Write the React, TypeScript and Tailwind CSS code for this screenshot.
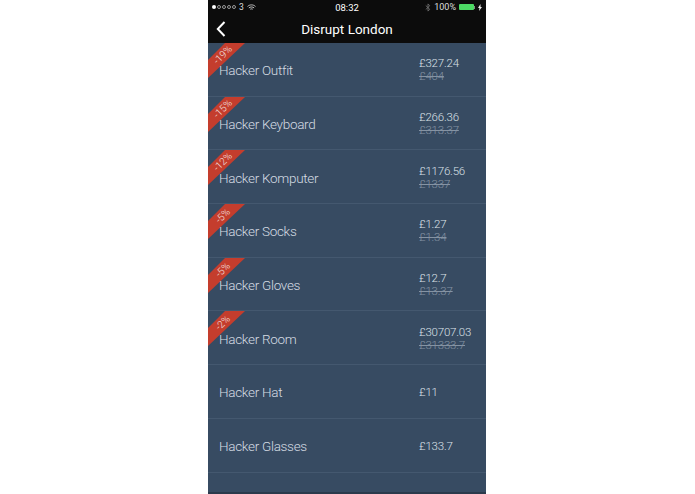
import React from "react";

const items = [
  { name: "Hacker Outfit", price: "£327.24", old: "£404", off: "-19%" },
  { name: "Hacker Keyboard", price: "£266.36", old: "£313.37", off: "-15%" },
  { name: "Hacker Komputer", price: "£1176.56", old: "£1337", off: "-12%" },
  { name: "Hacker Socks", price: "£1.27", old: "£1.34", off: "-5%" },
  { name: "Hacker Gloves", price: "£12.7", old: "£13.37", off: "-5%" },
  { name: "Hacker Room", price: "£30707.03", old: "£31333.7", off: "-2%" },
  { name: "Hacker Hat", price: "£11" },
  { name: "Hacker Glasses", price: "£133.7" },
] as { name: string; price: string; old?: string; off?: string }[];

function Ribbon({ off }: { off: string }) {
  return (
    <div className="absolute left-0 top-0 w-[38px] h-[36px]">
      <svg width="38" height="36" viewBox="0 0 38 36" className="block">
        <polygon points="17,0 37,0 0,35 0,17" fill="#c43d2d" />
      </svg>
      <span className="absolute left-[2px] top-[5px] w-[24px] translate-x-[1px] translate-y-[1px] text-center text-[10px] leading-[12px] text-[#f3e4e0] font-light -rotate-45">
        {off}
      </span>
    </div>
  );
}

function Row({ item }: { item: (typeof items)[number] }) {
  return (
    <div className="relative h-[53.7px] shrink-0 flex items-center border-b border-[#44586f] pl-[11px] pt-[2px]">
      {item.off && <Ribbon off={item.off} />}
      <div className="flex-1 text-[13.5px] font-light tracking-[-0.3px] text-[#d5dce3] relative">{item.name}</div>
      <div className="w-[67px] text-[11.5px] leading-[13px] tracking-[-0.2px] font-light text-[#dbe1e8] relative">
        <div>{item.price}</div>
        {item.old && <div className="line-through text-[#8593a3]">{item.old}</div>}
      </div>
    </div>
  );
}

export default function App() {
  return (
    <div className="w-[695px] h-[494px] bg-white flex justify-center overflow-hidden" style={{ fontFamily: 'Roboto,"Liberation Sans",sans-serif' }}>
      <div className="ml-[-1px] w-[278px] h-[494px] flex flex-col bg-[#374b62] overflow-hidden">
        <div className="h-[43px] shrink-0 bg-[#0c0c0c] text-white flex flex-col">
          <div className="h-[14px] px-[4px] flex items-center justify-between text-[8.5px] leading-none relative">
            <div className="flex items-center gap-[3px] text-[#ddd]">
              <div className="flex gap-[1px]">
                <span className="w-[4px] h-[4px] rounded-full bg-white" />
                {[0, 1, 2, 3].map((i) => (
                  <span key={i} className="w-[4px] h-[4px] rounded-full border-[0.5px] border-[#999]" />
                ))}
              </div>
              <span>3</span>
              <svg width="9" height="7" viewBox="0 0 10 8" fill="none" stroke="#ddd" strokeWidth="1">
                <path d="M0.5 2.8C3 0.4 7 0.4 9.500 2.800M2 4.500C3.800 3 6.200 3 8 4.500M3.600 6C4.500 5.400 5.500 5.400 6.400 6" />
              </svg>
            </div>
            <span className="absolute left-0 right-0 top-[3px] text-center text-[9.5px]">08:32</span>
            <div className="flex items-center gap-[3px] text-[#ddd]">
              <svg width="6" height="9" viewBox="0 0 6 10" fill="none" stroke="#777" strokeWidth="0.9">
                <path d="M0.500 2.800L5 7 3 9V1L5 3L0.500 7.200" />
              </svg>
              <span className="text-[9px]">100%</span>
              <div className="flex items-center">
                <div className="w-[15px] h-[6px] bg-[#4cd964] rounded-[1px]" />
                <div className="w-[1px] h-[3px] bg-[#888]" />
              </div>
              <svg width="4" height="7" viewBox="0 0 4 7" fill="#eee">
                <path d="M2.500 0L0 4H1.500L1 7L4 3H2.500Z" />
              </svg>
            </div>
          </div>
          <div className="flex-1 relative flex items-center justify-center pt-[1px]">
            <svg width="10" height="16" viewBox="0 0 10 16" fill="none" stroke="white" strokeWidth="2" className="absolute left-[8px] top-[7px]">
              <path d="M8.500 1L1.800 8L8.500 15" />
            </svg>
            <span className="text-[13.5px]">Disrupt London</span>
          </div>
        </div>
        {items.map((it) => (
          <Row key={it.name} item={it} />
        ))}
        <div className="flex-1" />
        <div className="h-[2px] shrink-0 bg-[#2b3a4c]" />
      </div>
    </div>
  );
}
